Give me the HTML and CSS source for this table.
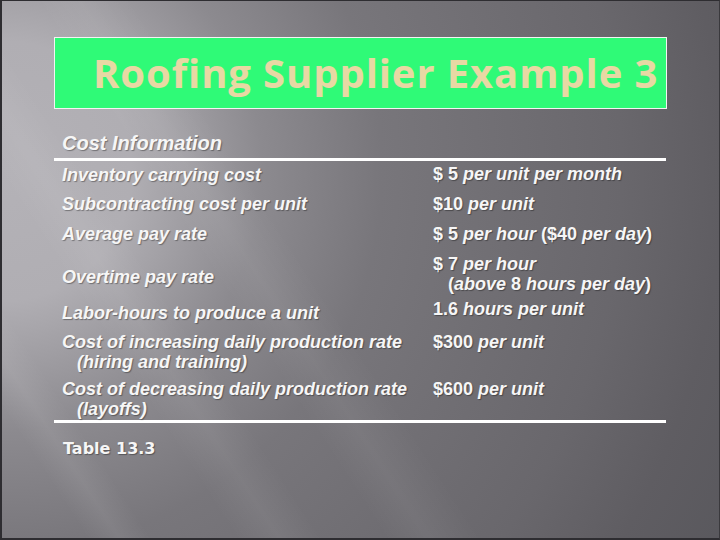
FILE: index.html
```html
<!DOCTYPE html>
<html>
<head>
<meta charset="utf-8">
<link rel="stylesheet" href="styles.css">
</head>
<body>
<div class="slide">
  <div class="title-box"><h1 class="title">Roofing Supplier Example 3</h1></div>
  <div class="table">
    <div class="caption">Cost Information</div>
    <div class="rows">
      <div class="row r1">
        <div class="lbl">Inventory carrying cost</div>
        <div class="val up"><b class="n">$ 5</b> per unit per month</div>
      </div>
      <div class="row r2">
        <div class="lbl">Subcontracting cost per unit</div>
        <div class="val"><b class="n">$10</b> per unit</div>
      </div>
      <div class="row r3">
        <div class="lbl">Average pay rate</div>
        <div class="val"><b class="n">$ 5</b> per hour <b class="n">($40</b> per day<b class="n">)</b></div>
      </div>
      <div class="row r4">
        <div class="lbl mid">Overtime pay rate</div>
        <div class="val hang"><b class="n">$ 7</b> per hour<br><b class="n">(</b>above <b class="n">8</b> hours per day<b class="n">)</b></div>
      </div>
      <div class="row r5">
        <div class="lbl low">Labor-hours to produce a unit</div>
        <div class="val"><b class="n">1.6</b> hours per unit</div>
      </div>
      <div class="row r6">
        <div class="lbl hang">Cost of increasing daily production rate<br>(hiring and training)</div>
        <div class="val"><b class="n">$300</b> per unit</div>
      </div>
      <div class="row r7">
        <div class="lbl hang">Cost of decreasing daily production rate<br>(layoffs)</div>
        <div class="val"><b class="n">$600</b> per unit</div>
      </div>
    </div>
  </div>
  <div class="source">Table 13.3</div>
</div>
</body>
</html>
```
FILE: styles.css
```css
html, body {
  margin: 0;
  padding: 0;
  background: #2b2a2e;
}
.slide {
  box-sizing: border-box;
  width: 720px;
  height: 540px;
  border-top: 1px solid #2e2d31;
  border-left: 2px solid #2e2d31;
  border-bottom: 2px solid #2e2d31;
  border-right: 1px solid #3a393d;
  padding: 36px 0 0 52px;
  background:
    linear-gradient(57deg, rgba(255,255,255,0) 8%, rgba(255,255,255,0.07) 11%, rgba(255,255,255,0) 14%,
      rgba(255,255,255,0) 22%, rgba(255,255,255,0.06) 26%, rgba(255,255,255,0) 30%,
      rgba(255,255,255,0) 36%, rgba(255,255,255,0.05) 40%, rgba(255,255,255,0) 45%),
    radial-gradient(circle at 0px 170px, #b4b2b7 0px, #b0aeb3 130px, #8c8a8f 260px, #78767b 380px, #69676c 620px, #5f5d62 720px, #59585d 820px);
  font-family: "Liberation Sans", Arial, sans-serif;
  color: #f6f6f6;
}
.title-box {
  box-sizing: border-box;
  width: 613px;
  height: 72px;
  background: #2ffa77;
  border: 1.5px solid #f4f4f4;
  padding: 11px 0 0 38px;
}
.title {
  margin: 0;
  font-family: "Open Sans", Lato, sans-serif;
  font-weight: 700;
  font-size: 40px;
  letter-spacing: 0.9px;
  line-height: 48px;
  color: #e8d8a4;
  white-space: nowrap;
  font-variant-ligatures: none;
}
.table {
  width: 612px;
  margin-top: 20px;
  text-shadow: 1px 1px 1px rgba(0,0,0,0.35);
}
.caption {
  font-size: 20px;
  font-weight: 700;
  font-style: italic;
  line-height: 24px;
  padding-left: 8px;
  padding-top: 2px;
  padding-bottom: 3px;
  border-bottom: 3px solid #ffffff;
}
.rows {
  display: grid;
  grid-template-rows: 29px 30px 30px 45px 33px 47px 41px;
  padding-top: 4px;
  border-bottom: 3px solid #ffffff;
  font-size: 18px;
  font-weight: 700;
  font-style: italic;
  line-height: 20px;
}
.row {
  display: grid;
  grid-template-columns: 379px 1fr;
  align-items: start;
}
.lbl {
  padding-left: 8px;
}
.val {
  white-space: nowrap;
}
.up { margin-top: -1px; }
.mid { align-self: center; }
.low { padding-top: 4px; }
.hang {
  padding-left: 15px;
  text-indent: -15px;
}
.lbl.hang { padding-left: 23px; }
.n {
  font-style: normal;
}
.source {
  margin-top: 16px;
  padding-left: 9px;
  font-family: "DejaVu Sans", Verdana, sans-serif;
  font-weight: 700;
  font-size: 16px;
  line-height: 20px;
  color: #f6f6f6;
  text-shadow: 1px 1px 1px rgba(0,0,0,0.35);
}
```
